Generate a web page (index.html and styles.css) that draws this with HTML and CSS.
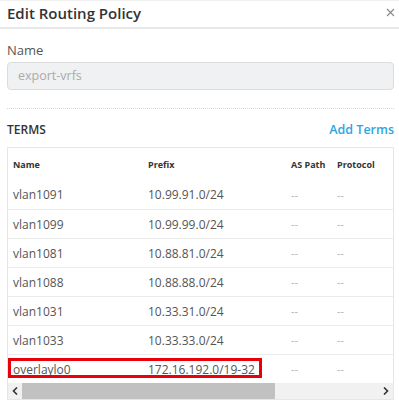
FILE: index.html
```html
<!DOCTYPE html>
<html>
<head>
<meta charset="utf-8">
<link rel="stylesheet" href="styles.css">
</head>
<body>
<div class="modal">
  <div class="modal-header">
    <h1 class="title">Edit Routing Policy</h1>
    <button class="close" aria-label="Close">
      <svg width="9" height="9" viewBox="0 0 9 9"><path d="M1 1L8 8M8 1L1 8" stroke="#888" stroke-width="1.1" fill="none"/></svg>
    </button>
  </div>
  <div class="modal-body">
    <label class="field-label">Name</label>
    <div class="input">export-vrfs</div>
    <div class="divider"></div>
    <div class="terms-head">
      <span class="terms-title">TERMS</span>
      <a class="add-link">Add Terms</a>
    </div>
    <div class="table-box">
      <div class="table-clip">
        <table class="terms">
          <colgroup>
            <col class="c-name"><col class="c-prefix"><col class="c-as"><col class="c-proto"><col class="c-more">
          </colgroup>
          <thead>
            <tr><th>Name</th><th>Prefix</th><th>AS Path</th><th>Protocol</th><th></th></tr>
          </thead>
          <tbody>
            <tr><td>vlan1091</td><td>10.99.91.0/24</td><td class="dash">--</td><td class="dash">--</td><td></td></tr>
            <tr><td>vlan1099</td><td>10.99.99.0/24</td><td class="dash">--</td><td class="dash">--</td><td></td></tr>
            <tr><td>vlan1081</td><td>10.88.81.0/24</td><td class="dash">--</td><td class="dash">--</td><td></td></tr>
            <tr><td>vlan1088</td><td>10.88.88.0/24</td><td class="dash">--</td><td class="dash">--</td><td></td></tr>
            <tr><td>vlan1031</td><td>10.33.31.0/24</td><td class="dash">--</td><td class="dash">--</td><td></td></tr>
            <tr><td>vlan1033</td><td>10.33.33.0/24</td><td class="dash">--</td><td class="dash">--</td><td></td></tr>
            <tr class="last"><td>overlaylo0</td><td>172.16.192.0/19-32</td><td class="dash">--</td><td class="dash">--</td><td></td></tr>
          </tbody>
        </table>
        <div class="highlight"></div>
      </div>
      <div class="hscroll">
        <span class="arrow"><svg width="6" height="8" viewBox="0 0 6 8"><path d="M5 0.5L1.5 4L5 7.5" stroke="#333" stroke-width="1.6" fill="none"/></svg></span>
        <span class="thumb"></span>
        <span class="track"></span>
        <span class="arrow"><svg width="6" height="8" viewBox="0 0 6 8"><path d="M1 0.5L4.5 4L1 7.5" stroke="#333" stroke-width="1.6" fill="none"/></svg></span>
      </div>
    </div>
  </div>
</div>
</body>
</html>
```

FILE: styles.css
```css
* { box-sizing: border-box; }
html, body { margin: 0; padding: 0; background: #fff; }
body { font-family: "Open Sans", "Liberation Sans", sans-serif; color: #555; }
.modal { width: 399px; height: 407px; overflow: hidden; border-top: 1px solid #f2f2f2; }
.modal-header {
  height: 28px;
  border-bottom: 2px solid #e8e8e8;
  display: flex;
  align-items: flex-start;
  justify-content: space-between;
  padding: 0 3px 0 7px;
}
.title { margin: 0; font-size: 15px; font-weight: 600; color: #333; line-height: 24px; }
.close { border: 0; background: none; padding: 0; margin-top: 5px; width: 12px; height: 12px; display: flex; align-items: center; justify-content: center; }
.modal-body { padding: 0 5px 0 7px; }
.field-label { display: block; font-size: 13px; color: #555; line-height: 18px; margin-top: 12px; }
.input {
  margin-top: 3px;
  height: 28px;
  background: #f0f1f2;
  border: 1px solid #dcdcdc;
  border-radius: 4px;
  font-size: 12.5px;
  color: #aaa;
  line-height: 26px;
  padding-left: 10px;
}
.divider { margin-top: 18px; border-top: 1px dotted #d6d6d6; height: 0; }
.terms-head { display: flex; justify-content: space-between; align-items: center; margin-top: 11px; height: 18px; }
.terms-title { font-size: 12px; font-weight: 600; color: #333; }
.add-link { font-size: 12.5px; font-weight: 600; color: #2ba6e1; }
.table-box { margin-top: 9px; border: 1px solid #e6e6e6; }
.table-clip { overflow: hidden; position: relative; }
.terms { border-collapse: collapse; width: 480px; table-layout: fixed; font-size: 12px; }
.c-name { width: 135px; }
.c-prefix { width: 143px; }
.c-as { width: 46px; }
.c-proto { width: 70px; }
.c-more { width: 86px; }
.terms th { text-align: left; font-size: 9px; font-weight: 700; color: #333; height: 32px; padding: 1px 0 0 5px; vertical-align: middle; }
.terms td { height: 29px; padding: 1px 0 0 5px; border-top: 1px solid #ebebeb; color: #555; white-space: nowrap; }
.terms tbody tr:first-child td { border-top: 0; }
.terms td.dash { color: #b0b0b0; font-size: 10.5px; }
.highlight {
  position: absolute;
  left: 0;
  bottom: 5px;
  width: 254px;
  height: 20px;
  border: 3px solid #e8000b;
  pointer-events: none;
}
.hscroll { display: flex; height: 16px; background: #f1f1f1; }
.arrow { width: 14px; display: flex; align-items: center; justify-content: center; flex: none; }
.thumb { width: 253px; background: #c1c1c1; flex: none; }
.track { flex: 1; }
```
